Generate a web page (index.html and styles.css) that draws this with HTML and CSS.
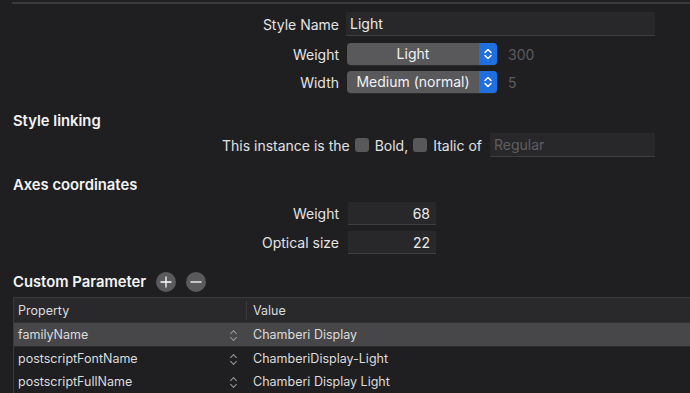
FILE: index.html
```html
<!DOCTYPE html>
<html lang="en">
<head>
    <meta charset="UTF-8">
    <title>Instance</title>
    <link rel="stylesheet" href="styles.css">
</head>
<body>
    <div class="topline"></div>

    <div class="row row-name">
        <label class="label">Style Name</label>
        <div class="field text-field name-field">Light</div>
    </div>
    <div class="row row-weight">
        <label class="label">Weight</label>
        <div class="popup">
            <span class="popup-text">Light</span>
            <span class="popup-arrows">
                <svg width="10" height="14" viewBox="0 0 10 14"><path d="M2 5.5 L5 2.5 L8 5.5 M2 8.5 L5 11.5 L8 8.5" fill="none" stroke="#fff" stroke-width="1.5" stroke-linecap="round" stroke-linejoin="round"/></svg>
            </span>
        </div>
        <span class="hint">300</span>
    </div>
    <div class="row row-width">
        <label class="label">Width</label>
        <div class="popup">
            <span class="popup-text">Medium (normal)</span>
            <span class="popup-arrows">
                <svg width="10" height="14" viewBox="0 0 10 14"><path d="M2 5.5 L5 2.5 L8 5.5 M2 8.5 L5 11.5 L8 8.5" fill="none" stroke="#fff" stroke-width="1.5" stroke-linecap="round" stroke-linejoin="round"/></svg>
            </span>
        </div>
        <span class="hint">5</span>
    </div>

    <h3 class="section linking-title">Style linking</h3>
    <div class="linking">
        <span>This instance is the</span>
        <span class="checkbox"></span>
        <span>Bold,</span>
        <span class="checkbox"></span>
        <span>Italic of</span>
        <div class="field text-field regular-field">Regular</div>
    </div>

    <h3 class="section axes-title">Axes coordinates</h3>
    <div class="row row-axis">
        <label class="label">Weight</label>
        <div class="field num-field">68</div>
    </div>
    <div class="row row-axis2">
        <label class="label">Optical size</label>
        <div class="field num-field">22</div>
    </div>

    <div class="custom-head">
        <h3 class="section">Custom Parameter</h3>
        <span class="round-btn">
            <svg width="20" height="20" viewBox="0 0 20 20"><path d="M10 4.5 V15.5 M4.5 10 H15.5" stroke="#fff" stroke-width="1.3"/></svg>
        </span>
        <span class="round-btn">
            <svg width="20" height="20" viewBox="0 0 20 20"><path d="M4.5 10 H15.5" stroke="#fff" stroke-width="1.3"/></svg>
        </span>
    </div>

    <div class="table">
        <div class="tr thead">
            <div class="td prop">Property</div>
            <div class="td val">Value</div>
        </div>
        <div class="tr selected">
            <div class="td prop">familyName<span class="stepper"></span></div>
            <div class="td val">Chamberi Display</div>
        </div>
        <div class="tr">
            <div class="td prop">postscriptFontName<span class="stepper"></span></div>
            <div class="td val">ChamberiDisplay-Light</div>
        </div>
        <div class="tr">
            <div class="td prop">postscriptFullName<span class="stepper"></span></div>
            <div class="td val">Chamberi Display Light</div>
        </div>
    </div>
</body>
</html>
```

FILE: styles.css
```css
body {
    margin: 0;
    background-color: #1f1f21;
    color: #e2e2e4;
    font-family: Inter, "Liberation Sans", sans-serif;
    font-size: 14px;
    height: 393px;
    overflow: hidden;
}

.topline {
    margin: 2px 0 0 12px;
    height: 2px;
    background-color: #3a3a3c;
}

.row {
    display: flex;
    align-items: center;
}

.label {
    width: 339px;
    text-align: right;
    margin-right: 8px;
    color: #e4e4e6;
}

.field {
    box-sizing: border-box;
    background-color: #28282a;
    border-bottom: 1px solid #3e3e40;
}

.text-field {
    height: 24px;
    line-height: 24px;
    padding-left: 4px;
}

.row-name {
    margin-top: 8px;
}

.name-field {
    width: 309px;
    margin-left: -1px;
    color: #ececee;
}

.row-weight {
    margin-top: 7px;
}

.row-width {
    margin-top: 6px;
}

.popup {
    display: flex;
    width: 150px;
    height: 22px;
    border-radius: 4px;
    overflow: hidden;
    background-color: #59595b;
    box-shadow: 0 1px 0 #2a2a2c;
}

.popup-text {
    flex: 1;
    text-align: center;
    line-height: 22px;
    color: #f2f2f4;
}

.popup-arrows {
    width: 18px;
    display: flex;
    align-items: center;
    justify-content: center;
    background-color: #1f6fe0;
}

.hint {
    margin-left: 11px;
    color: #5c5c5e;
}

.section {
    margin: 0;
    font-size: 14.8px;
    font-weight: 600;
    color: #f4f4f6;
}

.linking-title {
    margin: 19px 0 0 13px;
}

.linking {
    display: flex;
    align-items: center;
    justify-content: flex-end;
    width: 655px;
    margin-top: 3px;
    gap: 5px;
}

.checkbox {
    width: 14px;
    height: 14px;
    border-radius: 3px;
    background-color: #58585a;
    margin-right: 1px;
}

.regular-field {
    width: 165px;
    margin-left: 3px;
    color: #5e5e60;
}

.axes-title {
    margin: 19px 0 0 13px;
}

.row-axis {
    margin-top: 8px;
}

.row-axis2 {
    margin-top: 6px;
}

.num-field {
    width: 88px;
    height: 23px;
    line-height: 23px;
    margin-left: 1px;
    padding-right: 6px;
    text-align: right;
    color: #ececee;
}

.custom-head {
    display: flex;
    align-items: center;
    margin: 18px 0 0 13px;
    gap: 10px;
}

.round-btn {
    width: 20px;
    height: 20px;
    border-radius: 50%;
    background-color: #5a5a5c;
}

.table {
    margin: 5px 0 0 13px;
    border-left: 1px solid #3a3a3c;
    border-top: 1px solid #3a3a3c;
    font-size: 12.5px;
}

.tr {
    display: flex;
    box-sizing: border-box;
    height: 23px;
    align-items: center;
    color: #dcdcde;
}

.thead {
    height: 25px;
    background-color: #29292b;
    border-bottom: 1px solid #323234;
}

.selected {
    height: 24px;
    background-color: #474749;
    border-bottom: 1px solid #2c2c2e;
}

.td {
    box-sizing: border-box;
}

.prop {
    width: 233px;
    padding-left: 4px;
    position: relative;
    height: 100%;
    display: flex;
    align-items: center;
}

.thead .prop {
    border-right: 1px solid #3a3a3c;
    height: 19px;
}

.val {
    padding-left: 6px;
}

.stepper {
    position: absolute;
    right: 10px;
    top: 50%;
    width: 7px;
    height: 11px;
    margin-top: -5px;
}

.stepper::before,
.stepper::after {
    content: "";
    position: absolute;
    left: 1px;
    width: 4px;
    height: 4px;
    border-left: 1px solid #9a9a9c;
    border-top: 1px solid #9a9a9c;
}

.stepper::before {
    top: 1px;
    transform: rotate(45deg);
}

.stepper::after {
    bottom: 1px;
    transform: rotate(-135deg);
}
```
